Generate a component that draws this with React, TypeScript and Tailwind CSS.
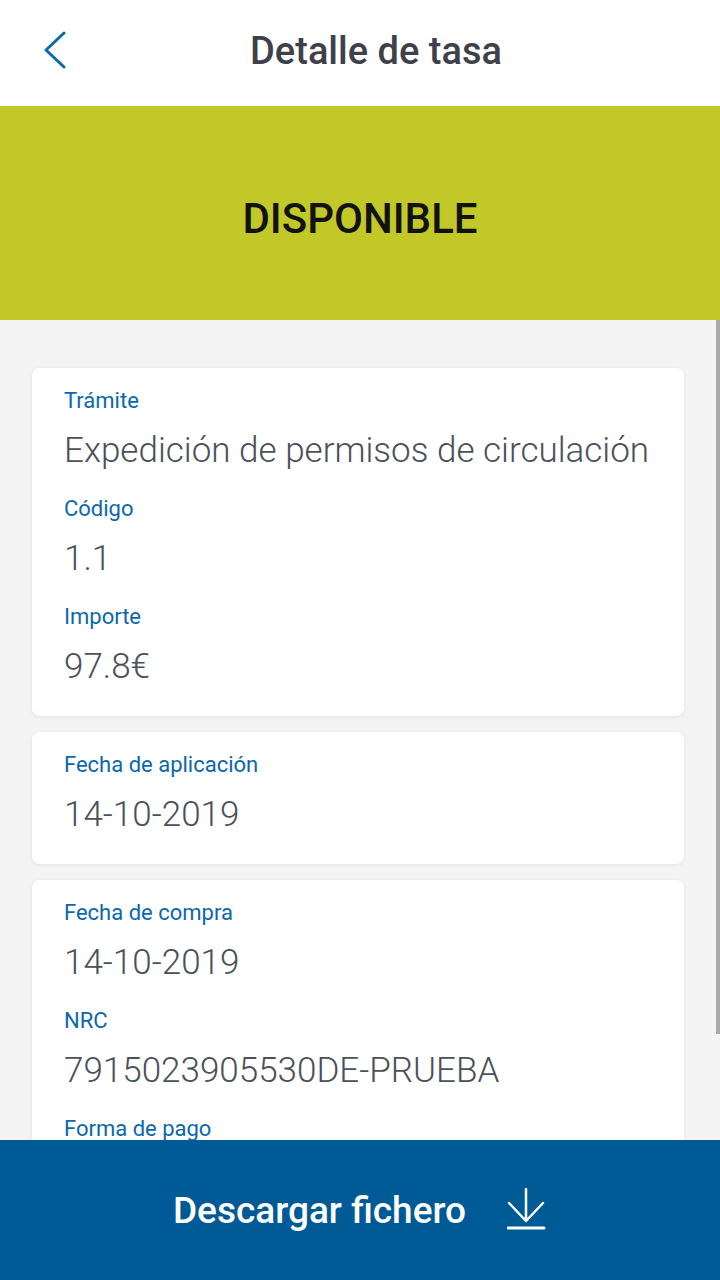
import React from "react";

type Field = { label: string; value: string };

const cards: Field[][] = [
  [
    { label: "Trámite", value: "Expedición de permisos de circulación" },
    { label: "Código", value: "1.1" },
    { label: "Importe", value: "97.8€" },
  ],
  [{ label: "Fecha de aplicación", value: "14-10-2019" }],
  [
    { label: "Fecha de compra", value: "14-10-2019" },
    { label: "NRC", value: "7915023905530DE-PRUEBA" },
    { label: "Forma de pago", value: "Tarjeta" },
  ],
];

function InfoCard({ fields }: { fields: Field[] }) {
  return (
    <div className="flex flex-col gap-[24px] rounded-lg bg-white px-8 pb-[29px] pt-[19px] shadow-[0_1px_4px_rgba(0,0,0,0.08)]">
      {fields.map((f) => (
        <div key={f.label} className="flex flex-col">
          <span className="text-[22px] leading-[28px] text-[#0b68ab]">{f.label}</span>
          <span className="mt-[16px] whitespace-nowrap text-[35px] font-light leading-[40px] text-[#4b5059]">
            {f.value}
          </span>
        </div>
      ))}
    </div>
  );
}

export default function App() {
  return (
    <div
      className="relative flex h-[1280px] w-[720px] flex-col overflow-hidden bg-[#f4f4f4]"
      style={{ fontFamily: "Roboto, 'Noto Sans', sans-serif" }}
    >
      {/* Header */}
      <header className="relative flex h-[106px] shrink-0 items-center justify-center bg-white pl-[32px]">
        <button className="absolute left-[40px] top-[30px] flex h-[40px] w-[28px] items-center justify-center">
          <svg width="24" height="38" viewBox="0 0 24 38" fill="none">
            <path d="M22 2 L4 19 L22 36" stroke="#0b68ab" strokeWidth="3" strokeLinecap="round" strokeLinejoin="round" />
          </svg>
        </button>
        <h1 className="-mt-[4px] text-[38px] font-medium leading-none text-[#3d4149]">Detalle de tasa</h1>
      </header>

      {/* Status */}
      <div className="flex h-[214px] shrink-0 items-center justify-center bg-[#c2c828]">
        <span className="mt-[12px] text-[42px] font-medium leading-none text-[#121212]">DISPONIBLE</span>
      </div>

      {/* Content */}
      <main className="flex flex-col gap-4 pl-8 pr-[36px] pt-12">
        {cards.map((c, i) => (
          <InfoCard key={i} fields={c} />
        ))}
      </main>

      {/* Scrollbar */}
      <div className="absolute right-0 top-[320px] h-[714px] w-[4px] bg-[#a9a9a9]" />

      {/* Bottom action */}
      <button className="absolute bottom-0 left-0 flex h-[140px] w-full items-center justify-center gap-[41px] bg-[#005a95]">
        <span className="text-[37px] font-medium leading-none text-white">Descargar fichero</span>
        <svg width="40" height="44" viewBox="0 0 40 44" fill="none">
          <path d="M19 1 V33 M2 15 L19 33 L36 15" stroke="white" strokeWidth="2.5" strokeLinecap="round" strokeLinejoin="round" />
          <path d="M1 40 H37" stroke="white" strokeWidth="3" strokeLinecap="round" />
        </svg>
      </button>
    </div>
  );
}
